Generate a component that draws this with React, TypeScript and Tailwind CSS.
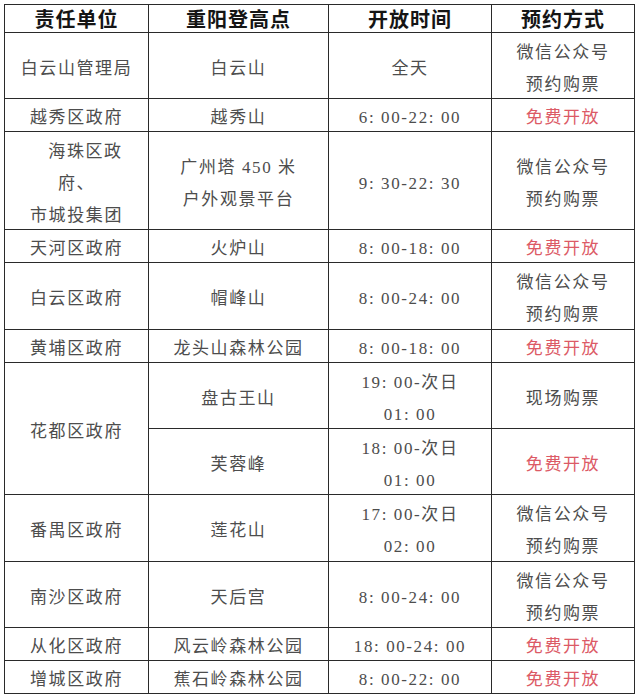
type Cell = {
  lines: string[];
  red?: boolean;
  span?: boolean;
  indent?: boolean[];
};

const body = "font-['Liberation_Serif','Noto_Sans_CJK_SC',serif] text-[17px] leading-[32px] tracking-[1.6px] text-[#4d4d4d]";

const headers = ["责任单位", "重阳登高点", "开放时间", "预约方式"];

const wx = ["微信公众号", "预约购票"];
const free = ["免费开放"];

// rows of the table,花都 spans two rows in the first column
const rows: Cell[][] = [
  [{ lines: ["白云山管理局"] }, { lines: ["白云山"] }, { lines: ["全天"] }, { lines: wx }],
  [{ lines: ["越秀区政府"] }, { lines: ["越秀山"] }, { lines: ["6: 00-22: 00"] }, { lines: free, red: true }],
  [
    { lines: ["海珠区政", "府、", "市城投集团"], indent: [true, false, false] },
    { lines: ["广州塔 450 米", "户外观景平台"] },
    { lines: ["9: 30-22: 30"] },
    { lines: wx },
  ],
  [{ lines: ["天河区政府"] }, { lines: ["火炉山"] }, { lines: ["8: 00-18: 00"] }, { lines: free, red: true }],
  [{ lines: ["白云区政府"] }, { lines: ["帽峰山"] }, { lines: ["8: 00-24: 00"] }, { lines: wx }],
  [{ lines: ["黄埔区政府"] }, { lines: ["龙头山森林公园"] }, { lines: ["8: 00-18: 00"] }, { lines: free, red: true }],
  [{ lines: ["花都区政府"], span: true }, { lines: ["盘古王山"] }, { lines: ["19: 00-次日", "01: 00"] }, { lines: ["现场购票"] }],
  [{ lines: ["芙蓉峰"] }, { lines: ["18: 00-次日", "01: 00"] }, { lines: free, red: true }],
  [{ lines: ["番禺区政府"] }, { lines: ["莲花山"] }, { lines: ["17: 00-次日", "02: 00"] }, { lines: wx }],
  [{ lines: ["南沙区政府"] }, { lines: ["天后宫"] }, { lines: ["8: 00-24: 00"] }, { lines: wx }],
  [{ lines: ["从化区政府"] }, { lines: ["风云岭森林公园"] }, { lines: ["18: 00-24: 00"] }, { lines: free, red: true }],
  [{ lines: ["增城区政府"] }, { lines: ["蕉石岭森林公园"] }, { lines: ["8: 00-22: 00"] }, { lines: free, red: true }],
];

export default function App() {
  return (
    <div className="w-[640px] h-[700px] bg-white pt-[4px] pl-[4px]">
      <div className="grid w-[631px] grid-cols-[143px_179px_162px_142px] grid-rows-[27px_65px_32px_97px_32px_66px_32px_65px_65px_66px_65px_32px_32px] gap-px bg-[#2a2a2a] p-px">
        {headers.map((h) => (
          <div
            key={h}
            className="flex items-center justify-center bg-white font-['Noto_Sans_CJK_SC',sans-serif] text-[20px] font-bold tracking-[1px] text-[#151515]"
          >
            {h}
          </div>
        ))}
        {rows.flatMap((row, r) =>
          row.map((cell, c) => (
            <div
              key={`${r}-${c}`}
              className={`flex flex-col items-center justify-center bg-white pt-[6px] text-center ${body} ${
                cell.span ? "row-span-2" : ""
              } ${cell.red ? "text-[#dc5a66]" : ""}`}
            >
              {cell.lines.map((l, i) => (
                <div key={i} className={cell.indent?.[i] ? "pl-[18px]" : ""}>
                  {l}
                </div>
              ))}
            </div>
          ))
        )}
      </div>
    </div>
  );
}
